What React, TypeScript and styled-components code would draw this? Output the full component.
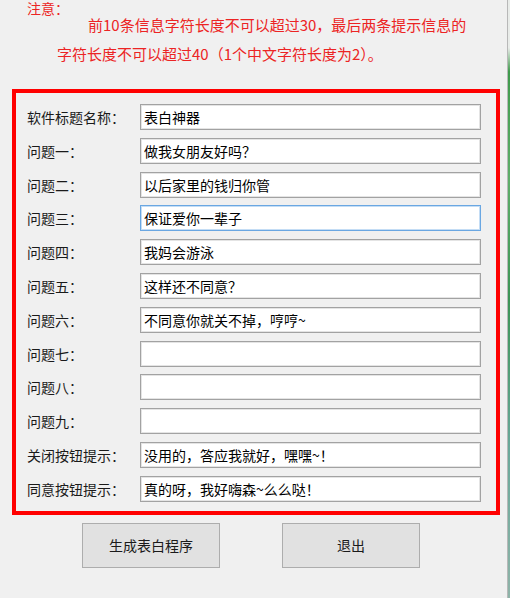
import styled, { createGlobalStyle } from 'styled-components';

const GlobalStyle = createGlobalStyle`
    html, body {
        margin: 0;
        padding: 0;
        background: #f0f0f0;
        overflow: hidden;
    }
    * {
        box-sizing: border-box;
    }
`

const Page = styled.div`
    display: flex;
    flex-direction: row;
    width: 510px;
    height: 598px;
    font-family: "Microsoft YaHei", "Noto Sans CJK SC", sans-serif;
`
const Dialog = styled.div`
    display: flex;
    flex-direction: column;
    width: 507px;
    background: #f0f0f0;
`
const WindowEdge = styled.div`
    width: 1px;
    background: #b8b8b8;
`
const Desktop = styled.div`
    flex: 1;
    background: linear-gradient(180deg, #e9ece9 0%, #e9ece9 8%, #3f9a4c 12%, #5fae6a 30%, #3c9456 50%, #6aa89a 75%, #8fb3a8 100%);
`
const Notice = styled.div`
    display: flex;
    flex-direction: column;
    color: #ec2424;
`
const NoticeTitle = styled.div`
    font-size: 14px;
    line-height: 14px;
    padding: 1px 0 0 27px;
`
const NoticeLine = styled.div<{ $indent: number, $gap: number }>`
    font-size: 15px;
    line-height: 20px;
    margin-top: ${p => p.$gap}px;
    padding-left: ${p => p.$indent}px;
    white-space: nowrap;
`
const FormBox = styled.div`
    display: grid;
    grid-template-columns: 113px 341px;
    grid-auto-rows: 26px;
    row-gap: 7.8px;
    align-items: center;
    margin: 25px 0 0 12px;
    width: 488px;
    padding: 11px 15px 9px 11px;
    border: 4px solid #ff0000;
`
const Label = styled.div`
    font-size: 14px;
    color: #1a1a1a;
    white-space: nowrap;
`
const Field = styled.input<{ $focused?: boolean }>`
    height: 26px;
    width: 100%;
    margin: 0;
    padding: 0 3px;
    font-family: inherit;
    font-size: 14px;
    color: #000;
    background: #fff;
    border: 1px solid ${p => p.$focused ? '#6aa7e2' : '#a2a2a2'};
    box-shadow: inset 0 0 0 1px ${p => p.$focused ? '#c4ddf5' : '#e4e4e4'};
    outline: none;
    border-radius: 0;
`
const ButtonRow = styled.div`
    display: flex;
    flex-direction: row;
    gap: 62px;
    margin-top: 8px;
    padding-left: 82px;
`
const Button = styled.button`
    width: 138px;
    height: 45px;
    font-family: inherit;
    font-size: 14px;
    color: #1a1a1a;
    background: #e1e1e1;
    border: 1px solid #adadad;
    border-radius: 0;
    padding: 0;
`

const fields = [
    { label: '软件标题名称：', value: '表白神器' },
    { label: '问题一：', value: '做我女朋友好吗？' },
    { label: '问题二：', value: '以后家里的钱归你管' },
    { label: '问题三：', value: '保证爱你一辈子', focused: true },
    { label: '问题四：', value: '我妈会游泳' },
    { label: '问题五：', value: '这样还不同意？' },
    { label: '问题六：', value: '不同意你就关不掉，哼哼~' },
    { label: '问题七：', value: '' },
    { label: '问题八：', value: '' },
    { label: '问题九：', value: '' },
    { label: '关闭按钮提示：', value: '没用的，答应我就好，嘿嘿~！' },
    { label: '同意按钮提示：', value: '真的呀，我好嗨森~么么哒！' },
]

export default function App() {
    return (
        <Page>
            <GlobalStyle />
            <Dialog>
                <Notice>
                    <NoticeTitle>注意：</NoticeTitle>
                    <NoticeLine $indent={88} $gap={0}>
                        前10条信息字符长度不可以超过30，最后两条提示信息的
                    </NoticeLine>
                    <NoticeLine $indent={57} $gap={9}>
                        字符长度不可以超过40（1个中文字符长度为2）。
                    </NoticeLine>
                </Notice>
                <FormBox>
                    {fields.map((item, index) => [
                        <Label key={'label-' + index}>{item.label}</Label>,
                        <Field
                            key={'field-' + index}
                            $focused={item.focused}
                            defaultValue={item.value}
                            readOnly
                        />
                    ])}
                </FormBox>
                <ButtonRow>
                    <Button>生成表白程序</Button>
                    <Button>退出</Button>
                </ButtonRow>
            </Dialog>
            <WindowEdge />
            <Desktop />
        </Page>
    )
}
